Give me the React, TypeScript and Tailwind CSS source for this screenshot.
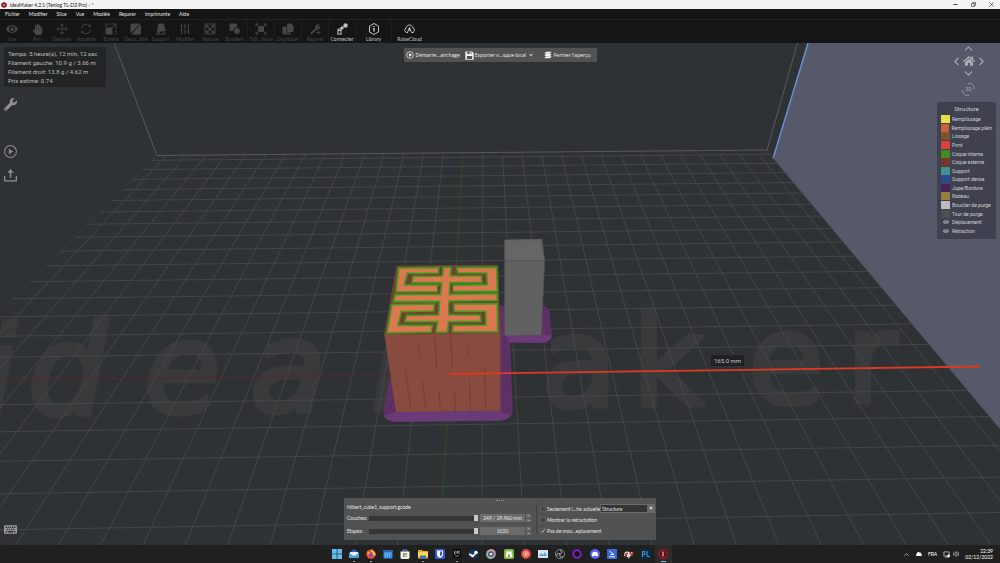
import { useState } from 'react'
import type { ReactNode } from 'react'
import { SlidersVertical, Move, ChevronUp, ChevronDown, ChevronLeft, ChevronRight } from 'lucide-react'
import { FaWrench, FaEye, FaHandPaper, FaHome, FaKeyboard, FaCloud } from 'react-icons/fa'

const menus = ['Fichier', 'Modifier', 'Slice', 'Vue', 'Modèle', 'Reparer', 'Imprimante', 'Aide']

const legend = [
  { label: 'Remplissage', color: '#e8e048' },
  { label: 'Remplissage plein', color: '#c8603a' },
  { label: 'Lissage', color: '#78552a' },
  { label: 'Pont', color: '#dc3f3c' },
  { label: 'Coque interne', color: '#3c8f1e' },
  { label: 'Coque externe', color: '#74362e' },
  { label: 'Support', color: '#439092' },
  { label: 'Support dense', color: '#264a94' },
  { label: 'Jupe/Bordure', color: '#4c2158' },
  { label: 'Radeau', color: '#94803e' },
  { label: 'Bouclier de purge', color: '#bcbcbc' },
  { label: 'Tour de purge', color: '#4e4e4e' },
  { label: 'Déplacement', color: null },
  { label: 'Rétraction', color: null },
]

const Glyph = ({ children, className = 'size-[12px]' }: { children: ReactNode; className?: string }) => (
  <svg viewBox="0 0 24 24" className={className} fill="none" stroke="currentColor" strokeWidth="2" aria-hidden="true">
    {children}
  </svg>
)

const editTools = [
  { label: 'Vue', icon: <FaEye className="size-[12px]" /> },
  { label: 'Pan', icon: <FaHandPaper className="size-[11px]" /> },
  { label: 'Deplacer', icon: <Move className="size-[12px]" strokeWidth={1.8} /> },
  {
    label: 'Rotation',
    icon: (
      <Glyph>
        <path d="M3 10a9.500 9.500 0 0 1 17-4M21 14a9.500 9.500 0 0 1-17 4" />
        <path d="M21 2v6h-5zM3 22v-6h5z" fill="currentColor" stroke="none" />
      </Glyph>
    ),
  },
  {
    label: 'Echelle',
    icon: (
      <Glyph>
        <path d="M2 10h12v12H2z" fill="currentColor" />
        <path d="M2 7V2h14M22 8v14h-5" strokeDasharray="4 2" />
        <path d="M12 12 21 3M15 2h7v7" />
      </Glyph>
    ),
  },
  {
    label: 'Deco...ibre',
    icon: (
      <Glyph>
        <path d="M3 2h16L2 19V3zM21 4v18H4z" fill="currentColor" />
      </Glyph>
    ),
  },
  {
    label: 'Support',
    icon: (
      <Glyph>
        <path d="m7 2 9 0 5 13-15 2z" fill="currentColor" />
        <path d="M2 22h20M5 13v9M9 18v4M18 17v4" />
      </Glyph>
    ),
  },
  { label: 'Modifier', icon: <SlidersVertical className="size-[12px]" /> },
  {
    label: 'Texture',
    icon: (
      <Glyph>
        <path d="M2 2h20v20H2z" />
        <path d="M4 4h5v5H4zM15 4h5v5h-5zM9 9h6v6H9zM4 15h5v5H4zM15 15h5v5h-5z" fill="currentColor" stroke="none" />
      </Glyph>
    ),
  },
  {
    label: 'Booléen',
    icon: (
      <Glyph>
        <path d="M2 2h13v13H2z" fill="currentColor" />
        <circle cx="16" cy="16" r="7" fill="currentColor" stroke="#141414" />
      </Glyph>
    ),
  },
]

const modelTools = [
  {
    label: 'Taill...imale',
    icon: (
      <Glyph>
        <path d="M7 7h10v10H7z" fill="currentColor" />
        <path d="M2 7V2h5M17 2h5v5M22 17v5h-5M7 22H2v-5M3 3l3 3M21 3l-3 3M3 21l3-3M21 21l-3-3" />
      </Glyph>
    ),
  },
  {
    label: 'Dupliquer',
    icon: (
      <Glyph>
        <path d="M11 2h7l4 4v11H11zM2 8h6v12h9v2H2z" fill="currentColor" />
      </Glyph>
    ),
  },
  {
    label: 'Reparer',
    icon: (
      <Glyph>
        <path d="M3 21 13 11c-1-4 2-8 6-8l-3 4 2 2 4-3c0 4-3 7-7 6L5 22z" fill="currentColor" />
        <path d="M19 15v8M15 19h8" />
      </Glyph>
    ),
  },
]

const activeTools = [
  {
    label: 'Connecter',
    width: 'w-[27px]',
    icon: (
      <Glyph>
        <path d="M2 22h10M4 21v-9h6v9M4 15h6" />
        <path d="m11 11 7-6" strokeDasharray="2 1" />
        <path d="M16 2h6v6h-6zM10 8h4v4h-4z" fill="currentColor" />
      </Glyph>
    ),
  },
  {
    label: 'Library',
    width: 'w-[36px]',
    icon: (
      <Glyph>
        <path d="m12 1 9 5v12l-9 5-9-5V6z" />
        <path d="M12 10v7M12 6v2" strokeWidth="3" />
      </Glyph>
    ),
  },
  {
    label: 'RaiseCloud',
    width: 'w-[36px]',
    icon: (
      <Glyph className="h-[12px] w-[13px]">
        <path d="M9 19H6a5 5 0 0 1-1-9c1-8 13-8 14 0a5 5 0 0 1 0 9h-3M8 19l4-10 4 10M12 9v6" />
      </Glyph>
    ),
  },
]

const ToolButton = ({ label, icon, className }: { label: string; icon: ReactNode; className: string }) => (
  <button className={`flex flex-col items-center justify-end gap-px ${className}`}>
    {icon}
    <span className="whitespace-nowrap font-['Liberation_Sans_Narrow',Lato,sans-serif] text-[5px] leading-[7px]">{label}</span>
  </button>
)

// Build plate projection: columns meet far behind the plate, rows get closer with depth
const columns = Array.from({ length: 31 }, (_, i) => {
  const n = i - 15
  return { n, x1: 463 + 19.75 * n, x2: 439.7 + 42.4 * n }
})

const rows = Array.from({ length: 22 }, (_, i) => {
  const k = i - 6
  const y = 1 / (0.0017699 + 0.0000742 * k) - 185
  return { k, y, end: y - (9.8 + (y - 155) * 0.0203) }
})

const BuildPlate = () => (
  <svg
    viewBox="0 43 1000 502"
    preserveAspectRatio="xMidYMid slice"
    className="absolute inset-0 h-full w-full"
    role="img"
    aria-label="Aperçu"
  >
    <defs>
      <clipPath id="plate">
        <path d="M157 155.500 767 150 1110 561 1000 600H0V313z" />
        <path d="M157 155.500-250 560H200L400 155z" />
      </clipPath>
    </defs>
    <path d="M0 43h1000v502H0z" fill="#2f3235" />
    <path d="M808 43h192v386L773 158.500z" fill="#555969" />
    <path d="M808 43 773 158.500" stroke="#6a92dc" strokeWidth="1.4" />
    <path d="M114 43 157 155.500 767 150 797.500 43" fill="none" stroke="#585959" />
    <g
      fill="#3a3a3c"
      stroke="#3a3a3c"
      strokeWidth="5"
      strokeLinejoin="round"
      fontFamily="'DejaVu Sans', Verdana, sans-serif"
      fontSize="124"
    >
      <text fontStyle="italic" x="-18 28 144 250 372" y="416 414 412 411 410">ideaM</text>
      <text x="541 632 748 846" y="406 405 403 402">aker</text>
    </g>
    <g clipPath="url(#plate)" stroke="#464849" strokeWidth="0.9">
      {columns.map((c) => (
        <line key={c.n} x1={c.x1} y1="155" x2={c.x2} y2="545" stroke={c.n === 0 ? '#28521f' : undefined} />
      ))}
      {rows.map((r) => (
        <line key={r.k} x1="0" y1={r.y} x2="1000" y2={r.end} stroke={r.k === 0 ? 'none' : undefined} />
      ))}
      <path d="M157 155.500-250 559M767 150 1000 429" />
    </g>
    <path d="M0 380 450 374" stroke="#59282a" />
    <PrintedModel />
    <path d="M450 374 980 366.500" stroke="#dd3a20" strokeWidth="1.8" />
    <path d="M711 355h33v11h-33z" fill="#202122" />
    <text x="727.500" y="363" textAnchor="middle" fontSize="6" fill="#c4c4c4" fontFamily="Roboto, sans-serif">
      165.0 mm
    </text>
  </svg>
)

const PrintedModel = () => (
  <g transform="translate(370 220) scale(.3333)">
    <path
      d="M62 465 40 570Q38 604 75 605L385 602Q432 598 428 565L420 366 520 368Q547 366 546 342L538 280Q535 258 515 257L389 257V465z"
      fill="#5f3266"
    />
    <path d="M78 576 391 572Q415 590 426 580 420 600 385 602L75 605Q48 603 42 588zM405 346 513 346 545 345Q542 366 520 368L420 368z" fill="#6b3a78" />
    <path
      d="M70 480 50 585M75 500 60 580M396 342 400 580M403 345 408 582M411 350 416 580M525 262 534 345M390 270 405 270"
      fill="none"
      stroke="#4a2853"
    />
    <path d="M403 59 516 57 524 122 514 346 404 347z" fill="#616161" />
    <path d="M408 63 511 62 519 120 406 122z" fill="#666666" />
    <path d="M516 57 524 122 514 346M404 60V346M406 122H520" fill="none" stroke="#505050" strokeWidth="2" />
    <path d="M80 137 384 135 391 340 391 572 78 576 43 343z" fill="#874b40" />
    <path d="M80 138 384 136 389 340 43 343z" fill="#70442f" />
    <g fill="#dc7850" stroke="#429a20" strokeWidth="5">
      <path d="M86 144 207 143 205 159 112 160 103 195 205 195 205 215 78 216z" />
      <path d="M261 143 380 142 382 214 248 214 246 196 352 194 350 159 264 159z" />
      <path d="M66 254 193 252 191 273 94 275 84 316 187 316 183 336 51 339z" />
      <path d="M251 252 382 251 383 335 247 336 248 316 348 315 347 274 253 274z" />
      <path d="M220 142H243L241 168 334 168 336 187 240 188 238 223 381 221 382 241 237 243 236 285 331 285 332 305 235 305 233 336 198 337 203 305 105 305 110 286 206 285 209 244 70 245 76 224 212 223 215 188 126 188 130 169 218 168z" />
    </g>
    <path
      d="M120 163V190M342 162V190M98 278V312M340 276V312M212 142V160M252 142V160M205 198V216M245 194V216M199 254V276M241 252V276M192 316V338M241 312V336"
      stroke="#713f35"
      strokeWidth="6"
    />
    <path
      d="M194 343 200 445M241 340 248 445M146 377 149 413M292 377 295 410M107 449 122 570M157 481 168 572M208 512 211 573M253 512 257 572M298 480 302 572M344 445 347 572"
      fill="none"
      stroke="#6b3831"
      strokeWidth="2"
    />
  </g>
)

const NavPad = () => (
  <div className="flex flex-col items-center gap-[5px] pr-[9px] text-[#a8abb5]">
    <div className="grid grid-cols-[12px_13px_12px] grid-rows-[9px_16px_9px] place-items-center">
      <button aria-label="Haut" className="col-start-2"><ChevronUp className="size-[13px]" /></button>
      <button aria-label="Gauche" className="col-start-1 row-start-2"><ChevronLeft className="size-[13px]" /></button>
      <button aria-label="Accueil" className="row-start-2"><FaHome className="size-[12px]" /></button>
      <button aria-label="Droite" className="row-start-2"><ChevronRight className="size-[13px]" /></button>
      <button aria-label="Bas" className="col-start-2 row-start-3"><ChevronDown className="size-[13px]" /></button>
    </div>
    <button aria-label="Vue 3D">
      <svg viewBox="0 0 24 24" className="size-[13px]" fill="none" stroke="currentColor" strokeWidth="1.500">
        <path d="M11 1c7-1 12 4 12 10M13 23c-7 1-12-4-12-10" />
        <text x="12" y="15" textAnchor="middle" fontSize="10" fill="currentColor" stroke="none" fontFamily="Roboto, sans-serif">3D</text>
      </svg>
    </button>
  </div>
)

const Legend = () => (
  <section className="w-[59px] bg-[#3f424e] px-1 pb-1 text-[#cfd0d4]">
    <h2 className="py-[2px] text-center text-[6px] leading-[9px]">Structure</h2>
    <ul className="flex h-[120px] flex-col">
      {legend.map((item) => (
        <li key={item.label} className="flex flex-1 items-center gap-[2px] whitespace-nowrap text-[5px] leading-[8px]">
          {item.color ? (
            <span className="h-[8px] w-[9px]" style={{ backgroundColor: item.color }} />
          ) : (
            <span className="flex w-[9px] justify-center"><FaEye className="size-[6px] text-[#a0a2aa]" /></span>
          )}
          {item.label}
        </li>
      ))}
    </ul>
  </section>
)

const sliderClass =
  'h-[5px] min-w-0 flex-1 appearance-none bg-[#363636] [&::-webkit-slider-thumb]:h-[6px] [&::-webkit-slider-thumb]:w-[4px] [&::-webkit-slider-thumb]:appearance-none [&::-webkit-slider-thumb]:bg-[#c8c8c8]'

const LayerRow = ({ id, label, value }: { id: string; label: string; value: string }) => {
  const [pos, setPos] = useState(100)

  return (
    <div className="flex h-[8px] items-center">
      <label htmlFor={id} className="w-[22px]">{label}</label>
      <input id={id} type="range" value={pos} onChange={(e) => setPos(Number(e.target.value))} className={sliderClass} />
      <input
        aria-label={`${label} valeur`}
        defaultValue={value}
        className="ml-[2px] h-[8px] w-[45px] bg-[#6b6b6b] text-center leading-[8px]"
      />
      <div className="ml-px flex h-[8px] w-[5px] flex-col gap-px">
        <button aria-label="Plus" className="flex flex-1 items-center justify-center bg-[#6b6b6b]">
          <svg viewBox="0 0 4 2" className="h-px w-[3px]"><path d="M0 2 2 0 4 2z" fill="#bbb" /></svg>
        </button>
        <button aria-label="Moins" className="flex flex-1 items-center justify-center bg-[#6b6b6b]">
          <svg viewBox="0 0 4 2" className="h-px w-[3px]"><path d="M0 0 2 2 4 0z" fill="#bbb" /></svg>
        </button>
      </div>
    </div>
  )
}

const Check = ({ label, checked = false }: { label: string; checked?: boolean }) => (
  <label className="flex h-[8px] items-center gap-[2px] whitespace-nowrap">
    <span className="grid place-items-center">
      <input
        type="checkbox"
        defaultChecked={checked}
        className="peer col-start-1 row-start-1 size-[4px] appearance-none bg-[#454545] outline-1 outline-[#5e5e5e]"
      />
      <svg viewBox="0 0 8 8" className="pointer-events-none invisible col-start-1 row-start-1 size-[4px] peer-checked:visible">
        <path d="M1 4 3 6.500 7 1" fill="none" stroke="#fff" strokeWidth="1.600" />
      </svg>
    </span>
    {label}
  </label>
)

const PreviewPanel = () => (
  <section className="w-[312px] bg-[#525252] px-[3px] pb-[5px] font-['Liberation_Sans_Narrow',Lato,sans-serif] text-[5px] leading-[8px] text-[#e8e8e8]">
    <div className="mx-auto h-[5px] w-[8px]">
      <div className="h-[3px] border-b border-dotted border-[#999]" />
    </div>
    <div className="flex">
      <div className="flex w-[189px] flex-col gap-[5px] pr-[5px]">
        <p className="-mb-[2px]">hilbert_cube1_support.gcode</p>
        <LayerRow id="layers" label="Couches:" value="249 / 29.960 mm" />
        <LayerRow id="steps" label="Etapes:" value="1020" />
      </div>
      <div className="flex flex-1 flex-col gap-[3px] border-l border-[#444] pl-[4px] pt-px">
        <div className="flex items-center justify-between">
          <Check label="Seulement l...he actuelle" />
          <div className="relative flex h-[9px] w-[55px] items-center border border-[#6a6a6a] bg-[#343434]">
            <select aria-label="Affichage" className="h-full w-full appearance-none pl-px">
              <option>Structure</option>
            </select>
            <span className="pointer-events-none absolute inset-y-0 right-0 flex w-[7px] items-center justify-center bg-[#696969]">
              <svg viewBox="0 0 6 4" className="h-[3px] w-[4px]"><path d="M0 0h6L3 4z" fill="#e0e0e0" /></svg>
            </span>
          </div>
        </div>
        <Check label="Montrer la retractation" />
        <Check label="Pas de mou...eplacement" checked />
      </div>
    </div>
  </section>
)

const apps: { name: string; open?: boolean; art: ReactNode }[] = [
  { name: 'Démarrer', art: <path d="M0 0h4.700v4.700H0zM5.300 0H10v4.700H5.300zM0 5.300h4.700V10H0zM5.300 5.300H10V10H5.300z" fill="#5fbdf0" /> },
  { name: 'Courrier', open: true, art: <><path d="M0 4 5 0l5 4v5H0z" fill="#2a6cb4" /><path d="M1 3h8v3L5 8 1 6z" fill="#e6f2fb" /><path d="m0 4 5 3 5-3v5H0z" fill="#4da3e0" /></> },
  { name: 'Firefox', open: true, art: <><circle cx="5" cy="5.200" r="4.600" fill="#f0552f" /><path d="M5 .5c2 1 5 3 4.500 6L6 6z" fill="#fcc233" /><circle cx="4.800" cy="5.500" r="2.200" fill="#8a3fc0" /><path d="M1 2c1 1 3 1 4 2L2 6z" fill="#fc9a2c" /></> },
  { name: 'Calendrier', art: <><path d="M.5 1h9v8.500h-9z" fill="#3f8fdc" /><path d="M.5 1h9v2h-9z" fill="#2468b0" /><path d="M2 5h6M2 7h5" stroke="#a4d2f6" strokeDasharray="1 1" /></> },
  { name: 'Store', art: <><path d="M3 3V1h4v2" fill="none" stroke="#4ba4dc" /><path d="M.5 2.500h9V9l-1 1h-7l-1-1z" fill="#eef0f2" /><path d="M3 4h1.800v1.800H3z" fill="#e8502c" /><path d="M5.200 4H7v1.800H5.200z" fill="#78b41e" /><path d="M3 6.200h1.800V8H3z" fill="#2a9ae0" /><path d="M5.200 6.200H7V8H5.200z" fill="#f5b81a" /></> },
  { name: 'Explorateur', open: true, art: <><path d="M0 1h4l1 1h5v7.500H0z" fill="#e8a820" /><path d="M0 3h10v5H0z" fill="#fcd45a" /><path d="M2 6.500h6v3H2z" fill="#2a78c8" /></> },
  { name: 'Bitwarden', art: <><rect width="10" height="10" rx="1" fill="#3259d4" /><path d="M2 1.500h6V6c0 1.500-2 2.500-3 3-1-.5-3-1.500-3-3z" fill="#fff" /><path d="M5 2.500h2V6L5 7.500z" fill="#3259d4" /></> },
  { name: 'Epic Games', open: true, art: <><path d="M1 0h8v8L5 10 1 8z" fill="#080808" /><path d="M2.500 2v3M2.500 2h1.300M2.500 3.500h1M2.500 5h1.300M5 5V2h1v1.500H5M7.800 2H7v3h.8M3 7h4" fill="none" stroke="#ddd" strokeWidth=".6" /></> },
  { name: 'Steam', art: <><circle cx="5" cy="5" r="4.800" fill="#17375e" /><path d="m0 5 4 2 4-4" fill="none" stroke="#fff" strokeWidth="1.600" /><circle cx="7" cy="3.500" r="1.700" fill="#fff" /><circle cx="3.500" cy="7" r="1.300" fill="#fff" /></> },
  { name: 'Chrome', art: <><circle cx="5" cy="5" r="4.800" fill="#a9a4ae" /><path d="M5 5 1 2.500C4-1 8 0 9.500 3z" fill="#c5a2ae" /><path d="m5 5 1 5C2 10 0 8 .4 4z" fill="#8ab8a8" /><circle cx="5" cy="5" r="2.700" fill="#463e64" /><circle cx="5" cy="5" r="1.500" fill="#e6e6f0" /></> },
  { name: 'Android', art: <><rect width="10" height="10" rx="1.500" fill="#7ab33c" /><path d="M2 5.500a3 3 0 0 1 6 0V8H2zM3 3 2 1.500M7 3l1-1.500" fill="#fff" stroke="#fff" strokeWidth=".6" /><path d="M4 5.500h2V8H4z" fill="#7ab33c" /></> },
  { name: 'Musique', art: <><circle cx="5" cy="5" r="4.900" fill="#ea4335" /><circle cx="5" cy="5" r="2.400" fill="none" stroke="#fff" strokeWidth=".7" /><path d="m4.200 3.600 2.300 1.400-2.300 1.400z" fill="#fff" /></> },
  { name: 'Moniteur', art: <><path d="M0 1h10v8H0z" fill="#d6e6f2" /><path d="M1 7 3 4l2 2 2-3 2 4z" fill="#5aa2d8" /></> },
  { name: 'OBS', art: <><circle cx="5" cy="5" r="4.500" fill="#1c1c1e" stroke="#b4b4b4" strokeWidth=".7" /><path d="M5 1.500c2.500 1 2 3 0 3.500M2 7c-.5-2.500 1.500-3.500 3-2M8 7.500C6 9 4 7.500 5 5" fill="none" stroke="#c8c8c8" strokeWidth="1" /></> },
  { name: 'Cercle', art: <circle cx="5" cy="5" r="3.800" fill="#161018" stroke="#8a1cdc" strokeWidth="1.700" /> },
  { name: 'Discord', art: <><circle cx="5" cy="5" r="4.900" fill="#5865f2" /><path d="M2.500 3.500Q5 2 7.500 3.500L8.200 7 6.500 7.500 6 6.800H4l-.5.700L1.800 7z" fill="#fff" /></> },
  { name: 'Scanner', art: <><path d="M0 0h10v10H0z" fill="#3a68dc" /><path d="M2.500 2 7 5.500H3.500M2 7.800h6" fill="none" stroke="#fff" strokeWidth=".9" /></> },
  { name: 'Fusion', art: <><path d="M0 7c1-4 3-5 5-3M3 8l2-5v5l3-5" fill="none" stroke="#fff" strokeWidth="1.200" /><path d="M0 5 4 4 2 8zM6 5l4-3-2 6z" fill="#dc3a2a" /></> },
  { name: 'Plasticity', art: <><path d="M0 0h10v10H0z" fill="#0c2740" /><path d="M1.500 8V2.500h2.200v3H1.500M6 2v5.500h3" fill="none" stroke="#48a0e0" strokeWidth="1" /></> },
  { name: 'ideaMaker', open: true, art: <><path d="m5 0 4 2.300v5.400L5 10 1 7.700V2.300z" fill="#5e0f14" stroke="#b42026" strokeWidth="1" /><path d="M5 2.500v5" stroke="#f2dcdc" strokeWidth="1" /></> },
]

const Taskbar = () => (
  <footer className="grid h-[18px] grid-cols-[1fr_344px_1fr] items-stretch bg-[#202020] text-white">
    <nav className="col-start-2 flex" aria-label="Applications">
      {apps.map((app) => (
        <button
          key={app.name}
          aria-label={app.name}
          className={`flex flex-1 flex-col items-center justify-end pb-px ${app.name === 'ideaMaker' ? 'bg-[#2b2b2b]' : ''}`}
        >
          <svg viewBox="0 0 10 10" className="size-[10px]">{app.art}</svg>
          <span
            className={`mt-[2px] h-px ${app.name === 'ideaMaker' ? 'w-[5px] bg-[#76b9ed]' : app.open ? 'w-[2px] bg-[#9a9a9a]' : 'w-[2px]'}`}
          />
        </button>
      ))}
    </nav>
    <div className="flex items-center justify-end gap-[6px] pr-[7px] text-[5px] leading-[6px]">
      <ChevronUp className="size-[7px]" />
      <FaCloud className="size-[6px]" />
      <span>FRA</span>
      <span className="flex gap-[3px]">
        <Glyph className="size-[7px]"><path d="M3 3h18v14H3zM7 21h9" /><circle cx="19" cy="17" r="4" fill="#fff" /></Glyph>
        <Glyph className="size-[6px]"><path d="M2 8h5l6-6v20l-6-6H2zM17 7c3 3 3 7 0 10M20 3c5 5 5 13 0 18" /></Glyph>
      </span>
      <time className="text-right">22:39<br />02/12/2022</time>
    </div>
  </footer>
)

const App = () => {
  return (
    <div className="flex min-h-screen flex-col bg-[#2f3235] font-[Lato,'Open_Sans',sans-serif]">
      <header className="bg-[#151515]">
        <div className="flex h-[9px] items-center gap-[3px] bg-[#f3f3f3] pl-px pr-[6px] text-[#222]">
          <svg viewBox="0 0 10 10" className="size-[6px]">
            <path d="m5 0 4.500 2.500v5L5 10 .5 7.500v-5z" fill="#8c1016" />
            <path d="M5 3v4" stroke="#fff" strokeWidth="1.500" />
          </svg>
          <h1 className="flex-1 text-[5px] leading-[8px]">ideaMaker 4.2.1 (Tenlog TL-D3 Pro) - *</h1>
          <div className="flex gap-[13px]">
            <button aria-label="Réduire"><Glyph className="size-[5px]"><path d="M2 12h20" strokeWidth="4" /></Glyph></button>
            <button aria-label="Restaurer"><Glyph className="size-[5px]"><path d="M2 8h14v14H2zM8 7V2h14v14h-5" strokeWidth="3" /></Glyph></button>
            <button aria-label="Fermer"><Glyph className="size-[5px]"><path d="m2 2 20 20M22 2 2 22" strokeWidth="3" /></Glyph></button>
          </div>
        </div>
        <nav className="flex h-[11px] items-center gap-[9px] border-b border-[#222] pl-[5px] text-[5px] leading-[8px] text-[#e4e4e4]">
          {menus.map((m) => (
            <button key={m}>{m}</button>
          ))}
        </nav>
        <div className="flex h-[23px] text-[#464646]">
          <div className="flex w-[247px]">
            {editTools.map((t) => (
              <ToolButton key={t.label} {...t} className="flex-1" />
            ))}
          </div>
          {modelTools.map((t) => (
            <ToolButton key={t.label} {...t} className="w-[27px] border-l border-[#1e1e1e]" />
          ))}
          {activeTools.map((t) => (
            <ToolButton key={t.label} label={t.label} icon={t.icon} className={`border-l border-[#1e1e1e] text-[#c4c4c4] ${t.width}`} />
          ))}
        </div>
      </header>

      <main className="relative flex flex-1 flex-col">
        <BuildPlate />
        <div className="relative flex flex-1 flex-col justify-between pb-[5px]">
          <div className="grid grid-cols-[1fr_auto_1fr] items-start">
            <div className="flex flex-col items-start pl-[4px] pt-[4px] text-[#8e8f90]">
              <div className="w-[102px] bg-[#222425] px-[4px] py-[2px] font-[Roboto,sans-serif] text-[6px] leading-[9px] text-[#bdbdbd]">
                <p>Temps: 5 heure(s), 12 min, 12 sec</p>
                <p>Filament gauche: 10.9 g / 3.66 m</p>
                <p>Filament droit: 13.8 g / 4.62 m</p>
                <p>Prix estime: 0.74</p>
              </div>
              <button aria-label="Outils" className="mt-[11px]"><FaWrench className="size-[13px]" /></button>
              <button aria-label="Lecture" className="mt-[34px]">
                <Glyph className="size-[13px]"><circle cx="12" cy="12" r="11" /><path d="m9 7 8 5-8 5z" fill="currentColor" stroke="none" /></Glyph>
              </button>
              <button aria-label="Exporter" className="mt-[11px]">
                <Glyph className="size-[13px]"><path d="M1 13v9h22v-9M12 16V4" strokeWidth="2.600" /><path d="m12 0 6 7H6z" fill="currentColor" stroke="none" /></Glyph>
              </button>
            </div>

            <div className="mt-[5px] flex h-[14px] w-[193px] items-center bg-[#525252] px-[2px] font-['Open_Sans',sans-serif] text-[5px] leading-[8px] text-[#f4f4f4]">
              <button className="flex items-center gap-[2px] whitespace-nowrap">
                <Glyph className="size-[8px]"><circle cx="12" cy="12" r="10" /><path d="m9 6 9 6-9 6z" fill="currentColor" stroke="none" /></Glyph>
                Démarre...anchage
              </button>
              <button className="ml-[2px] flex items-center gap-px whitespace-nowrap border-l border-[#484848] pl-[2px]">
                <Glyph className="size-[9px]"><path d="M1 1h18l4 4v18H1z" fill="currentColor" stroke="none" /><path d="M6 1h11v7H6zM5 13h14v8H5z" fill="#525252" stroke="none" /><path d="M12 2h3v5h-3z" fill="currentColor" stroke="none" /></Glyph>
                Exporter v...sque local
                <svg viewBox="0 0 6 4" className="ml-[2px] h-[3px] w-[4px]"><path d="M0 0h6L3 4z" fill="#bbb" /></svg>
              </button>
              <button className="ml-auto flex items-center gap-[2px] whitespace-nowrap pr-[4px]">
                <Glyph className="size-[8px]"><path d="M6 2h17l-5 6H1zM6 9h17l-5 6H1zM6 16h17l-5 6H1z" fill="currentColor" stroke="none" /></Glyph>
                Fermer l'aperçu
              </button>
            </div>

            <div className="flex flex-col items-end gap-[6px] pr-[4px] pt-px font-[Roboto,sans-serif]">
              <NavPad />
              <Legend />
            </div>
          </div>

          <div className="grid grid-cols-[1fr_auto_1fr] items-end">
            <button aria-label="Clavier" className="justify-self-start pb-[4px] pl-[4px] text-[#9a9b9c]"><FaKeyboard className="size-[13px]" /></button>
            <PreviewPanel />
          </div>
        </div>
      </main>

      <Taskbar />
    </div>
  )
}

export default App
